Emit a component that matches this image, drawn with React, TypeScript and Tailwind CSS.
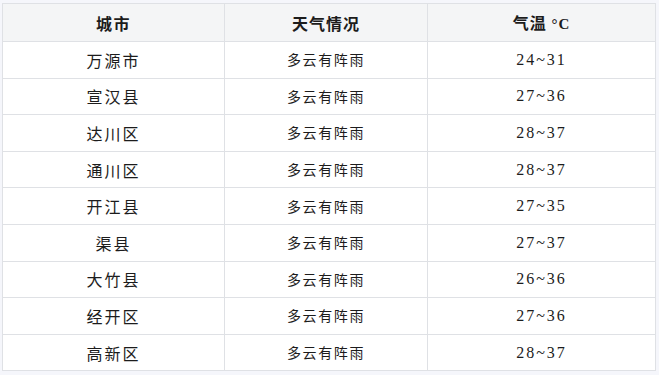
import React from 'react';

const rows = [
  ['万源市', '多云有阵雨', '24~31'],
  ['宣汉县', '多云有阵雨', '27~36'],
  ['达川区', '多云有阵雨', '28~37'],
  ['通川区', '多云有阵雨', '28~37'],
  ['开江县', '多云有阵雨', '27~35'],
  ['渠县', '多云有阵雨', '27~37'],
  ['大竹县', '多云有阵雨', '26~36'],
  ['经开区', '多云有阵雨', '27~36'],
  ['高新区', '多云有阵雨', '28~37'],
];

const App: React.FC = () => {
  return (
    <div className="w-[659px] h-[375px] bg-[#f5f6fb] pt-[3px] pl-[2px] pr-[4px] text-[#1c1c1c] font-['Noto_Sans_CJK_SC',sans-serif]">
      <table className="w-[653px] border-collapse table-fixed bg-white">
        <colgroup>
          <col className="w-[222px]" />
          <col className="w-[203px]" />
          <col className="w-[228px]" />
        </colgroup>
        <thead>
          <tr className="h-[38px] bg-[#f4f5f6]">
            <th className="border border-[#dfe1e5] text-[16px] font-bold tracking-[1.5px]">城市</th>
            <th className="border border-[#dfe1e5] text-[16px] font-bold tracking-[1px]">天气情况</th>
            <th className="border border-[#dfe1e5] text-[16px] font-bold tracking-[1px]">
              气温 <span className="font-['Liberation_Serif',serif] text-[15px]">°C</span>
            </th>
          </tr>
        </thead>
        <tbody>
          {rows.map(([city, weather, temp]) => (
            <tr key={city} className="h-[36.6px]">
              <td className="border border-[#dfe1e5] text-center text-[16px] tracking-[2px]">{city}</td>
              <td className="border border-[#dfe1e5] text-center text-[14px] tracking-[1.6px]">{weather}</td>
              <td className="border border-[#dfe1e5] text-center text-[16px] tracking-[2px] font-['Liberation_Serif',serif]">{temp}</td>
            </tr>
          ))}
        </tbody>
      </table>
    </div>
  );
};

export default App;
